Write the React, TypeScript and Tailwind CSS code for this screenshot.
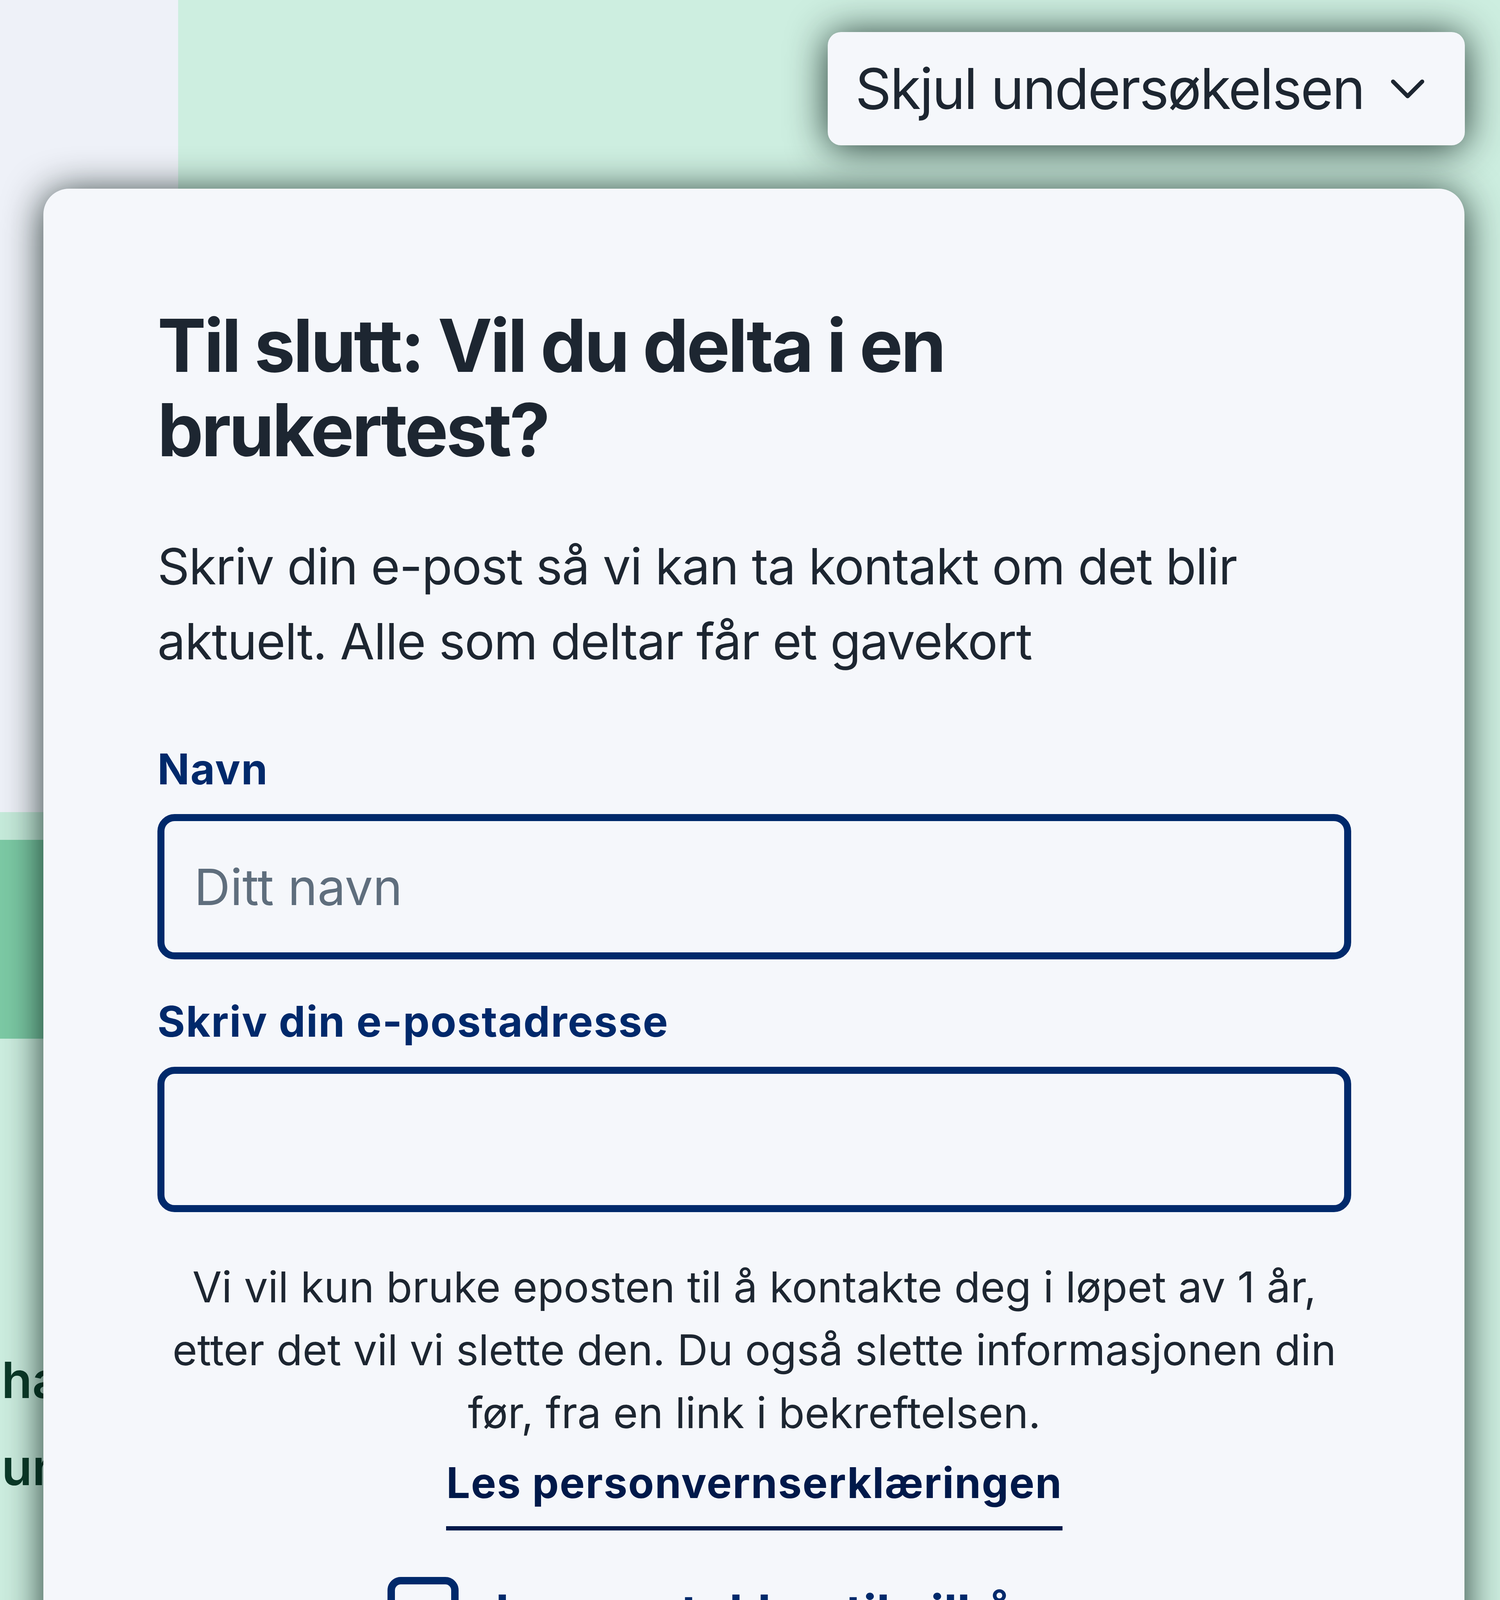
export default function App() {
  return (
    <div className="relative h-[5105px] w-[3840px] overflow-hidden bg-[#cdeee0] font-['Inter','Noto_Sans',sans-serif]">
      {/* page behind the dialog */}
      <div className="flex h-[2079px]">
        <div className="w-[456px] bg-[#eef1f8]" />
        <div className="flex-1 bg-[#cdeee0]" />
      </div>
      <div className="w-[456px] overflow-hidden">
        <div className="h-[71px] bg-[#c6ebdb]" />
        <div className="h-[509px] bg-[#7ccaa5]" />
        <div className="h-[1495px] pl-[4px] pt-[762px] text-[128px] font-semibold leading-[223px] text-[#0b3a28]">
          <p className="whitespace-nowrap">har du</p>
          <p className="whitespace-nowrap">untatt</p>
        </div>
        <div className="h-[14px] bg-[#0f3d2c]" />
        <div className="h-[330px] bg-[#e9edf5]" />
        <div className="h-[13px] bg-[#0f3d2c]" />
      </div>

      {/* toggle */}
      <button className="absolute right-[90px] top-[82px] flex h-[290px] items-center rounded-[34px] bg-[#f5f7fb] pl-[71px] pr-[103px] text-[144px] tracking-[-0.023em] text-[#1d2631] shadow-[0_6px_100px_rgba(0,20,15,0.85)]">
        <span className="whitespace-nowrap">Skjul undersøkelsen</span>
        <svg viewBox="0 0 14 8" className="ml-[68px] h-[51px] w-[87px] overflow-visible" fill="none">
          <path d="M1 1l6 6 6-6" stroke="#1d2631" strokeWidth="1.7" strokeLinecap="round" strokeLinejoin="round" />
        </svg>
      </button>

      {/* dialog */}
      <div className="absolute left-[111px] top-[483px] flex h-[4533px] w-[3638px] flex-col rounded-[66px] bg-[#f5f7fb] pl-[292px] pr-[290px] pt-[293px] shadow-[0_10px_100px_rgba(0,20,15,0.85)]">
        <h2 className="max-w-[2800px] text-[187px] font-bold leading-[216px] tracking-[-0.03em] text-[#1d2631]">
          Til slutt: Vil du delta i en brukertest?
        </h2>
        <p className="mt-[146px] text-[128px] leading-[192px] tracking-[-0.0125em] text-[#1d2631]">
          Skriv din e-post så vi kan ta kontakt om det blir aktuelt. Alle som deltar får et gavekort
        </p>

        <label className="mt-[153px] block text-[108px] font-bold leading-[156px] tracking-[0.02em] text-[#00296b]">
          Navn
        </label>
        <input
          placeholder="Ditt navn"
          className="mt-[37px] h-[372px] w-full rounded-[44px] border-[18px] border-[#00296b] bg-transparent pl-[76px] text-[128px] text-[#1d2631] outline-none placeholder:text-[#5f6e7d]"
        />

        <label className="mt-[81px] block text-[108px] font-bold leading-[156px] tracking-[0.02em] text-[#00296b]">
          Skriv din e-postadresse
        </label>
        <input className="mt-[38px] h-[372px] w-full rounded-[44px] border-[18px] border-[#00296b] bg-transparent pl-[76px] text-[128px] text-[#1d2631] outline-none" />

        <p className="mt-[111px] text-center text-[109px] leading-[161px] text-[#1d2631]">
          Vi vil kun bruke eposten til å kontakte deg i løpet av 1 år, etter det vil vi slette den. Du også slette informasjonen din før, fra en link i bekreftelsen.
        </p>
        <div className="mt-[21px] flex justify-center">
          <a className="border-b-[11px] border-[#00194a] pb-[33px] text-[108px] font-bold leading-[156px] tracking-[0.02em] text-[#00194a]">
            Les personvernserklæringen
          </a>
        </div>

        <div className="mt-[117px] flex items-center justify-center gap-[56px]">
          <span className="h-[182px] w-[182px] rounded-[34px] border-[19px] border-[#00296b]" />
          <span className="text-[125px] font-bold leading-[186px] text-[#00296b]">
            Jeg samtykker til vilkårene
          </span>
        </div>

        <div className="mt-auto flex items-start justify-between pb-[293px]">
          <a className="mt-[45px] border-b-[12px] border-[#001e5e] pb-[20px] text-[128px] leading-[192px] tracking-[-0.0125em] text-[#001e5e]">
            Tilbake
          </a>
          <button className="flex h-[282px] w-[491px] items-center justify-center rounded-[32px] bg-[#001c4e] text-[128px] tracking-[-0.0125em] text-white">
            Neste
          </button>
        </div>
      </div>
    </div>
  );
}
